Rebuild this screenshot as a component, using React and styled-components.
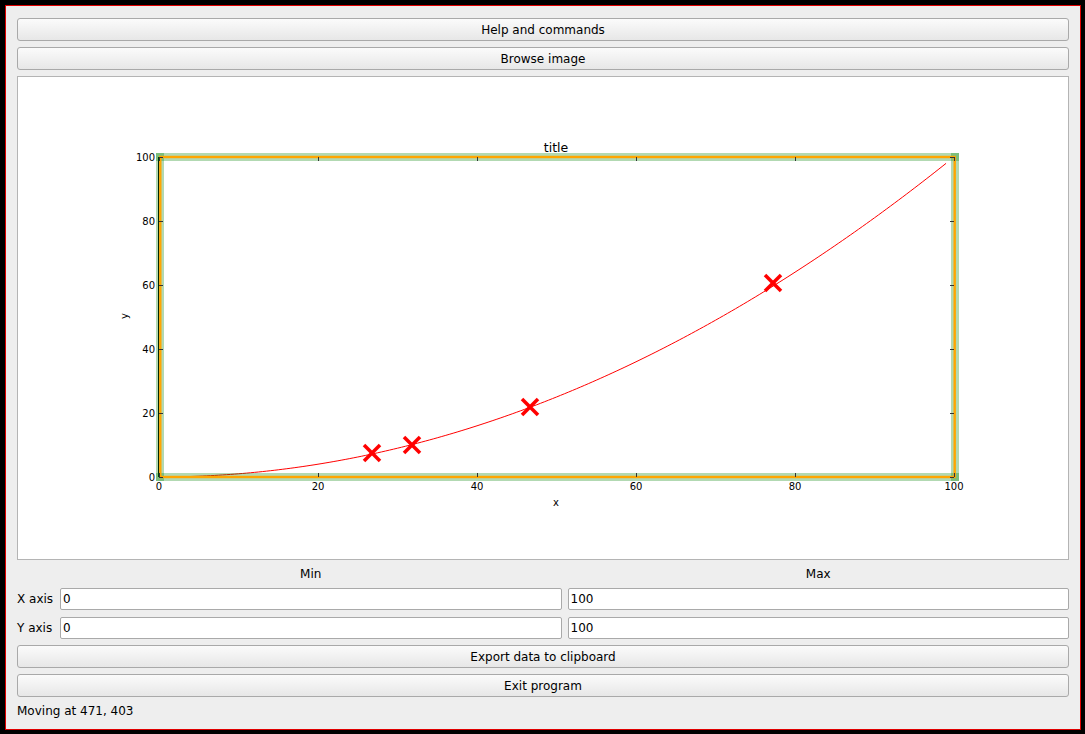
import React from "react";
import styled, { createGlobalStyle } from "styled-components";

const GlobalStyle = createGlobalStyle`
  html, body {
    margin: 0;
    padding: 0;
    background: #000;
    width: 1085px;
    height: 734px;
    overflow: hidden;
  }
  * {
    box-sizing: border-box;
  }
`;

const Window = styled.div`
  margin: 5px 0 0 5px;
  width: 1076px;
  height: 725px;
  border: 1px solid #e00000;
  background: #eeeeee;
  padding: 12px 11px 0 11px;
  display: flex;
  flex-direction: column;
  gap: 6px;
  font-family: "DejaVu Sans", "Liberation Sans", sans-serif;
  font-size: 12px;
  color: #000;
`;

const PushButton = styled.button`
  height: 23px;
  width: 100%;
  border: 1px solid #a9a9a9;
  border-radius: 3px;
  background: linear-gradient(#fbfbfb, #e7e7e7);
  font-family: inherit;
  font-size: 12px;
  color: #000;
  padding: 0;
  flex-shrink: 0;
`;

const PlotFrame = styled.div`
  height: 484px;
  flex-shrink: 0;
  border: 1px solid #b4b4b4;
  background: #fff;
  svg {
    display: block;
  }
`;

const Grid = styled.div`
  display: grid;
  grid-template-columns: 37px 1fr 1fr;
  grid-template-rows: 15px 23px 23px;
  column-gap: 6px;
  row-gap: 6px;
  align-items: center;
`;

const HeadLabel = styled.div`
  text-align: center;
  line-height: 15px;
  padding-top: 2px;
`;

const RowLabel = styled.div`
  white-space: nowrap;
  line-height: 15px;
  padding-top: 2px;
`;

const Field = styled.input`
  height: 22px;
  width: 100%;
  border: 1px solid #a9a9a9;
  border-radius: 2px;
  background: #fff;
  font-family: inherit;
  font-size: 12px;
  color: #000;
  padding: 0 2px;
  align-self: start;
  margin-top: 1px;
`;

const Status = styled.div`
  line-height: 14px;
  padding-top: 1px;
`;

const X0 = 159;
const X1 = 954;
const Y0 = 477;
const Y1 = 157;
const px = (x) => X0 + (x * (X1 - X0)) / 100;
const py = (y) => Y0 - (y * (Y0 - Y1)) / 100;

const curve = [];
for (let x = 0; x <= 99; x += 0.5) {
  curve.push(`${px(x).toFixed(2)},${py((x * x) / 100).toFixed(2)}`);
}

const marks = [
  [372, 453],
  [412, 445],
  [530, 407],
  [773, 283],
];

const ticks = [0, 20, 40, 60, 80, 100];

const Plot = () => (
  <svg width="1050" height="482" viewBox="18 77 1050 482">
    <line x1="158.5" y1={Y1} x2="158.5" y2={Y0} stroke="#000" strokeWidth="1" />
    <polyline points={curve.join(" ")} fill="none" stroke="#ff0000" strokeWidth="1" />
    {marks.map(([cx, cy]) => (
      <g key={cx} stroke="#ff0000" strokeWidth="3.5">
        <line x1={cx - 8} y1={cy - 8} x2={cx + 8} y2={cy + 8} />
        <line x1={cx - 8} y1={cy + 8} x2={cx + 8} y2={cy - 8} />
      </g>
    ))}
    <g stroke="rgba(0,128,0,0.3)" strokeWidth="8">
      <line x1="156" y1="157" x2="959" y2="157" />
      <line x1="156" y1="477" x2="959" y2="477" />
      <line x1="160" y1="153" x2="160" y2="481" />
      <line x1="955" y1="153" x2="955" y2="481" />
    </g>
    <rect x="160.3" y="157" width="794.4" height="320" fill="none" stroke="#ffa500" strokeWidth="2.4" />
    <g stroke="#333" strokeWidth="1">
      {ticks.map((t) => (
        <g key={t}>
          <line x1={px(t) + 0.5} y1="157" x2={px(t) + 0.5} y2="161" />
          <line x1={px(t) + 0.5} y1="477" x2={px(t) + 0.5} y2="473" />
          <line x1="159" y1={py(t) + 0.5} x2="163" y2={py(t) + 0.5} />
          <line x1="954" y1={py(t) + 0.5} x2="950" y2={py(t) + 0.5} />
        </g>
      ))}
    </g>
    <g fontFamily="DejaVu Sans, sans-serif" fontSize="10" fill="#000">
      {ticks.map((t) => (
        <text key={"x" + t} x={px(t)} y="490" textAnchor="middle">
          {t}
        </text>
      ))}
      {ticks.map((t) => (
        <text key={"y" + t} x="155" y={py(t) + 3.6} textAnchor="end">
          {t}
        </text>
      ))}
      <text x="556" y="506" textAnchor="middle">x</text>
      <text x="128" y="316" textAnchor="middle" transform="rotate(-90 128 316)">y</text>
    </g>
    <text x="556" y="152" textAnchor="middle" fontFamily="DejaVu Sans, sans-serif" fontSize="12.5" fill="#000">
      title
    </text>
  </svg>
);

export default function App() {
  return (
    <>
      <GlobalStyle />
      <Window>
        <PushButton>Help and commands</PushButton>
        <PushButton>Browse image</PushButton>
        <PlotFrame>
          <Plot />
        </PlotFrame>
        <Grid>
          <div />
          <HeadLabel>Min</HeadLabel>
          <HeadLabel>Max</HeadLabel>
          <RowLabel>X axis</RowLabel>
          <Field defaultValue="0" />
          <Field defaultValue="100" />
          <RowLabel>Y axis</RowLabel>
          <Field defaultValue="0" />
          <Field defaultValue="100" />
        </Grid>
        <PushButton>Export data to clipboard</PushButton>
        <PushButton>Exit program</PushButton>
        <Status>Moving at 471, 403</Status>
      </Window>
    </>
  );
}
